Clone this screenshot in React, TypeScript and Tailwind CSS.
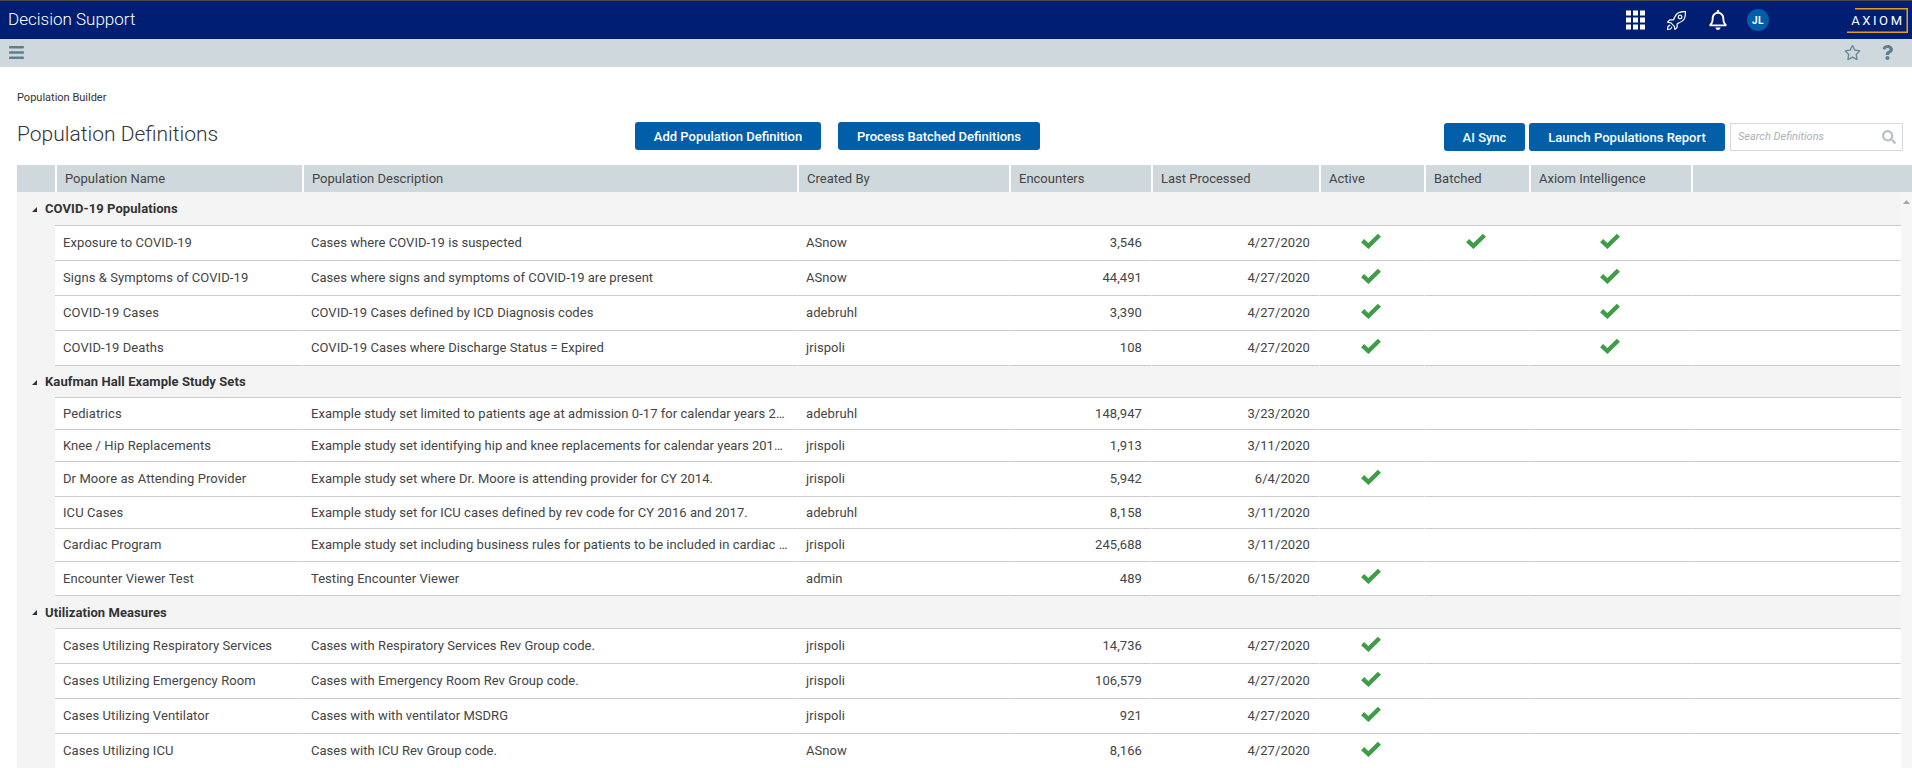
import React from "react";
import { FaBars, FaQuestion, FaRegBell, FaRegStar, FaSearch } from "react-icons/fa";
import { SlRocket } from "react-icons/sl";

type Row = { name: string; desc: string; by: string; enc: string; last: string; a?: boolean; b?: boolean; c?: boolean; h: string };

const groups: { title: string; h: string; rows: Row[] }[] = [
  {
    title: "COVID-19 Populations",
    h: "h-[33px]",
    rows: [
      { name: "Exposure to COVID-19", desc: "Cases where COVID-19 is suspected", by: "ASnow", enc: "3,546", last: "4/27/2020", a: true, b: true, c: true, h: "h-[35px]" },
      { name: "Signs & Symptoms of COVID-19", desc: "Cases where signs and symptoms of COVID-19 are present", by: "ASnow", enc: "44,491", last: "4/27/2020", a: true, c: true, h: "h-[35px]" },
      { name: "COVID-19 Cases", desc: "COVID-19 Cases defined by ICD Diagnosis codes", by: "adebruhl", enc: "3,390", last: "4/27/2020", a: true, c: true, h: "h-[35px]" },
      { name: "COVID-19 Deaths", desc: "COVID-19 Cases where Discharge Status = Expired", by: "jrispoli", enc: "108", last: "4/27/2020", a: true, c: true, h: "h-[35px]" },
    ],
  },
  {
    title: "Kaufman Hall Example Study Sets",
    h: "h-[31px]",
    rows: [
      { name: "Pediatrics", desc: "Example study set limited to patients age at admission 0-17 for calendar years 2…", by: "adebruhl", enc: "148,947", last: "3/23/2020", h: "h-[32px]" },
      { name: "Knee / Hip Replacements", desc: "Example study set identifying hip and knee replacements for calendar years 201…", by: "jrispoli", enc: "1,913", last: "3/11/2020", h: "h-[32px]" },
      { name: "Dr Moore as Attending Provider", desc: "Example study set where Dr. Moore is attending provider for CY 2014.", by: "jrispoli", enc: "5,942", last: "6/4/2020", a: true, h: "h-[35px]" },
      { name: "ICU Cases", desc: "Example study set for ICU cases defined by rev code for CY 2016 and 2017.", by: "adebruhl", enc: "8,158", last: "3/11/2020", h: "h-[32px]" },
      { name: "Cardiac Program", desc: "Example study set including business rules for patients to be included in cardiac …", by: "jrispoli", enc: "245,688", last: "3/11/2020", h: "h-[33px]" },
      { name: "Encounter Viewer Test", desc: "Testing Encounter Viewer", by: "admin", enc: "489", last: "6/15/2020", a: true, h: "h-[34px]" },
    ],
  },
  {
    title: "Utilization Measures",
    h: "h-[32px]",
    rows: [
      { name: "Cases Utilizing Respiratory Services", desc: "Cases with Respiratory Services Rev Group code.", by: "jrispoli", enc: "14,736", last: "4/27/2020", a: true, h: "h-[35px]" },
      { name: "Cases Utilizing Emergency Room", desc: "Cases with Emergency Room Rev Group code.", by: "jrispoli", enc: "106,579", last: "4/27/2020", a: true, h: "h-[35px]" },
      { name: "Cases Utilizing Ventilator", desc: "Cases with with ventilator MSDRG", by: "jrispoli", enc: "921", last: "4/27/2020", a: true, h: "h-[35px]" },
      { name: "Cases Utilizing ICU", desc: "Cases with ICU Rev Group code.", by: "ASnow", enc: "8,166", last: "4/27/2020", a: true, h: "h-[35px]" },
    ],
  },
];

const headers = ["", "Population Name", "Population Description", "Created By", "Encounters", "Last Processed", "Active", "Batched", "Axiom Intelligence", ""];

const cell = "flex items-center min-w-0 border-b border-b-[#cbcbcb] border-r border-r-white";

function Check({ on }: { on?: boolean }) {
  return (
    <div className={`${cell} justify-center pb-[5px] pr-[2px]`}>
      {on && (
        <svg width="20" height="16" viewBox="0 0 20 16" fill="none" stroke="#3f9c47" strokeWidth="4.4">
          <path d="M1.6 7.6L7.4 13L18.4 2.2" />
        </svg>
      )}
    </div>
  );
}

function Button({ children, w }: { children: React.ReactNode; w: string }) {
  return (
    <button className={`h-[28px] ${w} rounded-[3px] bg-[#005fa8] pt-[1px] text-[13px] font-medium text-white whitespace-nowrap flex items-center justify-center`}>
      {children}
    </button>
  );
}

export default function App() {
  return (
    <div className="h-screen overflow-hidden bg-white text-[13px] text-[#444] font-['Roboto',sans-serif]">
      <header className="h-[39px] flex items-center bg-[#001f72] border-t border-t-[#4a4a4a] text-white">
        <span className="ml-[8px] text-[17px] font-light">Decision Support</span>
        <div className="ml-auto flex items-center mr-[4px]">
          <svg width="19" height="20" viewBox="0 0 19 20" fill="#fff" className="mr-[22px]">
            {[0, 7, 14].flatMap((y) => [0, 7, 14].map((x) => <rect key={`${x}-${y}`} x={x} y={y + 0.5} width="5" height="5" />))}
          </svg>
          <SlRocket size={19} className="mr-[22px]" />
          <FaRegBell size={20} className="mr-[19px]" />
          <div className="w-[22px] h-[22px] rounded-full bg-[#005fa8] flex items-center justify-center text-[10px] font-bold tracking-[0.5px] mr-[78px]">JL</div>
          <div className="relative w-[61px] h-[25px] flex items-center justify-end pr-[6px]">
            <span className="text-[13px] font-normal tracking-[2.6px] leading-none mr-[-2.6px]">AXIOM</span>
            <svg width="61" height="25" viewBox="0 0 61 25" fill="none" className="absolute left-0 top-0" stroke="#e59f1f" strokeWidth="1.5">
              <path d="M8 .75H60.25V24.25H0" />
            </svg>
          </div>
        </div>
      </header>

      <div className="h-[28px] flex items-center pb-[2px] bg-[#cfd8dd] text-[#5e7f8e]">
        <FaBars size={17} className="ml-[8px]" />
        <FaRegStar size={17} className="ml-auto text-[#6b8a99]" />
        <FaQuestion size={15} className="ml-[19px] mr-[17px]" />
      </div>

      <div className="pt-[24px] pl-[17px] pr-[9px]">
        <div className="h-[14px] leading-[14px] text-[11px] text-[#333]">Population Builder</div>
        <div className="mt-[17px] h-[43px] flex items-start">
          <h1 className="w-[618px] h-[28px] leading-[24px] text-[21px] font-light text-[#333]">Population Definitions</h1>
          <Button w="w-[186px]">Add Population Definition</Button>
          <div className="w-[17px]" />
          <Button w="w-[202px]">Process Batched Definitions</Button>
          <div className="ml-auto mt-[1px] flex items-start">
            <Button w="w-[81px]">AI Sync</Button>
            <div className="w-[4px]" />
            <Button w="w-[196px]">Launch Populations Report</Button>
            <div className="ml-[5px] w-[173px] h-[28px] border border-[#d3dadf] flex items-center pl-[7px] pr-[6px]">
              <span className="text-[11px] italic text-[#a9b2b8]">Search Definitions</span>
              <FaSearch size={14} className="ml-auto text-[#b9c2c7]" />
            </div>
          </div>
        </div>
      </div>

      <div className="ml-[17px] h-[27px] grid grid-cols-[40px_247px_495px_212px_142px_168px_105px_105px_162px_1fr] bg-[#cfd8dd]">
        {headers.map((h, i) => (
          <div key={i} className={`flex items-center px-[8px] whitespace-nowrap ${i < headers.length - 1 ? "border-r-2 border-r-white" : ""}`}>
            {h}
          </div>
        ))}
      </div>

      <div className="ml-[17px] flex">
        <main className="flex-1 min-w-0 bg-[#f4f4f4] tracking-[0.08px]">
          {groups.map((g) => (
            <section key={g.title}>
              <div className={`${g.h} flex items-center pl-[15px] pt-[1px] font-bold text-[#333]`}>
                <svg width="5" height="5" viewBox="0 0 5 5" fill="#333"><path d="M5 0V5H0Z" /></svg>
                <span className="ml-[8px]">{g.title}</span>
              </div>
              <div className="ml-[38px] bg-white border-t border-t-[#cbcbcb]">
                {g.rows.map((r) => (
                  <div key={r.name} className={`${r.h} grid grid-cols-[248px_495px_212px_142px_168px_105px_105px_162px_1fr]`}>
                    <div className={`${cell} pl-[8px] whitespace-nowrap`}>{r.name}</div>
                    <div className={`${cell} pl-[8px] pr-[8px] whitespace-nowrap tracking-[0.04px]`}>{r.desc}</div>
                    <div className={`${cell} pl-[8px]`}>{r.by}</div>
                    <div className={`${cell} justify-end pr-[9px]`}>{r.enc}</div>
                    <div className={`${cell} justify-end pr-[9px]`}>{r.last}</div>
                    <Check on={r.a} />
                    <Check on={r.b} />
                    <Check on={r.c} />
                    <div className={cell} />
                  </div>
                ))}
              </div>
            </section>
          ))}
        </main>
        <aside className="w-[11px] bg-[#f6f6f6] flex justify-end pt-[8px] pr-[2px]">
          <svg width="7" height="4" viewBox="0 0 7 4" fill="#a8a8a8"><path d="M3.5 0L7 4H0Z" /></svg>
        </aside>
      </div>
    </div>
  );
}
